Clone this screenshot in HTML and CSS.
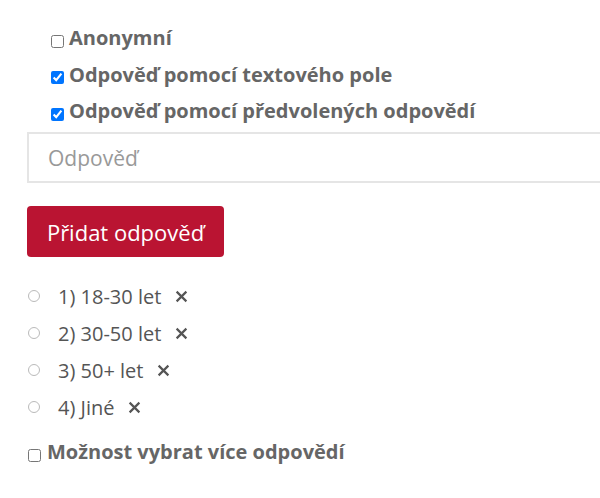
FILE: index.html
```html
<!DOCTYPE html>
<html>
<head>
<meta charset="utf-8">
<link rel="stylesheet" href="styles.css">
</head>
<body>
<div class="page">
  <div class="options">
    <label class="opt"><input type="checkbox" class="cb"><span>Anonymní</span></label>
    <label class="opt"><input type="checkbox" class="cb" checked><span>Odpověď pomocí textového pole</span></label>
    <label class="opt"><input type="checkbox" class="cb" checked><span>Odpověď pomocí předvolených odpovědí</span></label>
  </div>
  <input type="text" class="answer" placeholder="Odpověď">
  <button class="add">Přidat odpověď</button>
  <ul class="answers">
    <li><input type="radio" class="rb" name="a"><span class="txt">1) 18-30 let</span><svg class="del" viewBox="0 0 12 12"><path d="M1.5 1.5L10.5 10.5M10.5 1.5L1.5 10.5"/></svg></li>
    <li><input type="radio" class="rb" name="a"><span class="txt">2) 30-50 let</span><svg class="del" viewBox="0 0 12 12"><path d="M1.5 1.5L10.5 10.5M10.5 1.5L1.5 10.5"/></svg></li>
    <li><input type="radio" class="rb" name="a"><span class="txt">3) 50+ let</span><svg class="del" viewBox="0 0 12 12"><path d="M1.5 1.5L10.5 10.5M10.5 1.5L1.5 10.5"/></svg></li>
    <li><input type="radio" class="rb" name="a"><span class="txt">4) Jiné</span><svg class="del" viewBox="0 0 12 12"><path d="M1.5 1.5L10.5 10.5M10.5 1.5L1.5 10.5"/></svg></li>
  </ul>
  <label class="opt multi"><input type="checkbox" class="cb"><span>Možnost vybrat více odpovědí</span></label>
</div>
</body>
</html>
```
FILE: styles.css
```css
* { box-sizing: border-box; }
html, body { margin: 0; padding: 0; background: #fff; overflow: hidden; }
body { font-family: "Open Sans", sans-serif; color: #555; }
.page { padding: 25px 0 0 27px; width: 600px; }
.options { display: flex; flex-direction: column; gap: 10.5px; padding-left: 23px; }
.opt { display: flex; align-items: center; font-weight: 700; font-size: 20px; color: #666; line-height: 26px; }
.cb { width: 13px; height: 13px; margin: 6px 5px 0 1px; }
.answer {
  display: block; width: 573px; height: 51px; margin-top: 8px;
  border: 2px solid #e5e5e5; border-right: none; padding: 0 19px;
  font-family: "Open Sans", sans-serif; font-size: 21px; color: #555; outline: none;
}
.answer::placeholder { color: #999; }
.add {
  display: block; margin-top: 23px; height: 51px; width: 197px;
  background: #ba1432; color: #fff; border: none; border-radius: 4px;
  font-family: "Open Sans", sans-serif; font-size: 22px; padding: 0;
}
.answers { list-style: none; margin: 26px 0 0; padding: 0; display: flex; flex-direction: column; gap: 11px; }
.answers li { display: flex; align-items: center; height: 26px; font-size: 20px; color: #555; }
.rb { width: 12px; height: 12px; margin: 0 18px 0 1px; opacity: 0.5; }
.del { width: 13px; height: 13px; margin-left: 14px; fill: none; stroke: #555; stroke-width: 2; }
.multi { margin-top: 19px; }
.multi .cb { margin-left: 1px; margin-right: 6px; }
```
